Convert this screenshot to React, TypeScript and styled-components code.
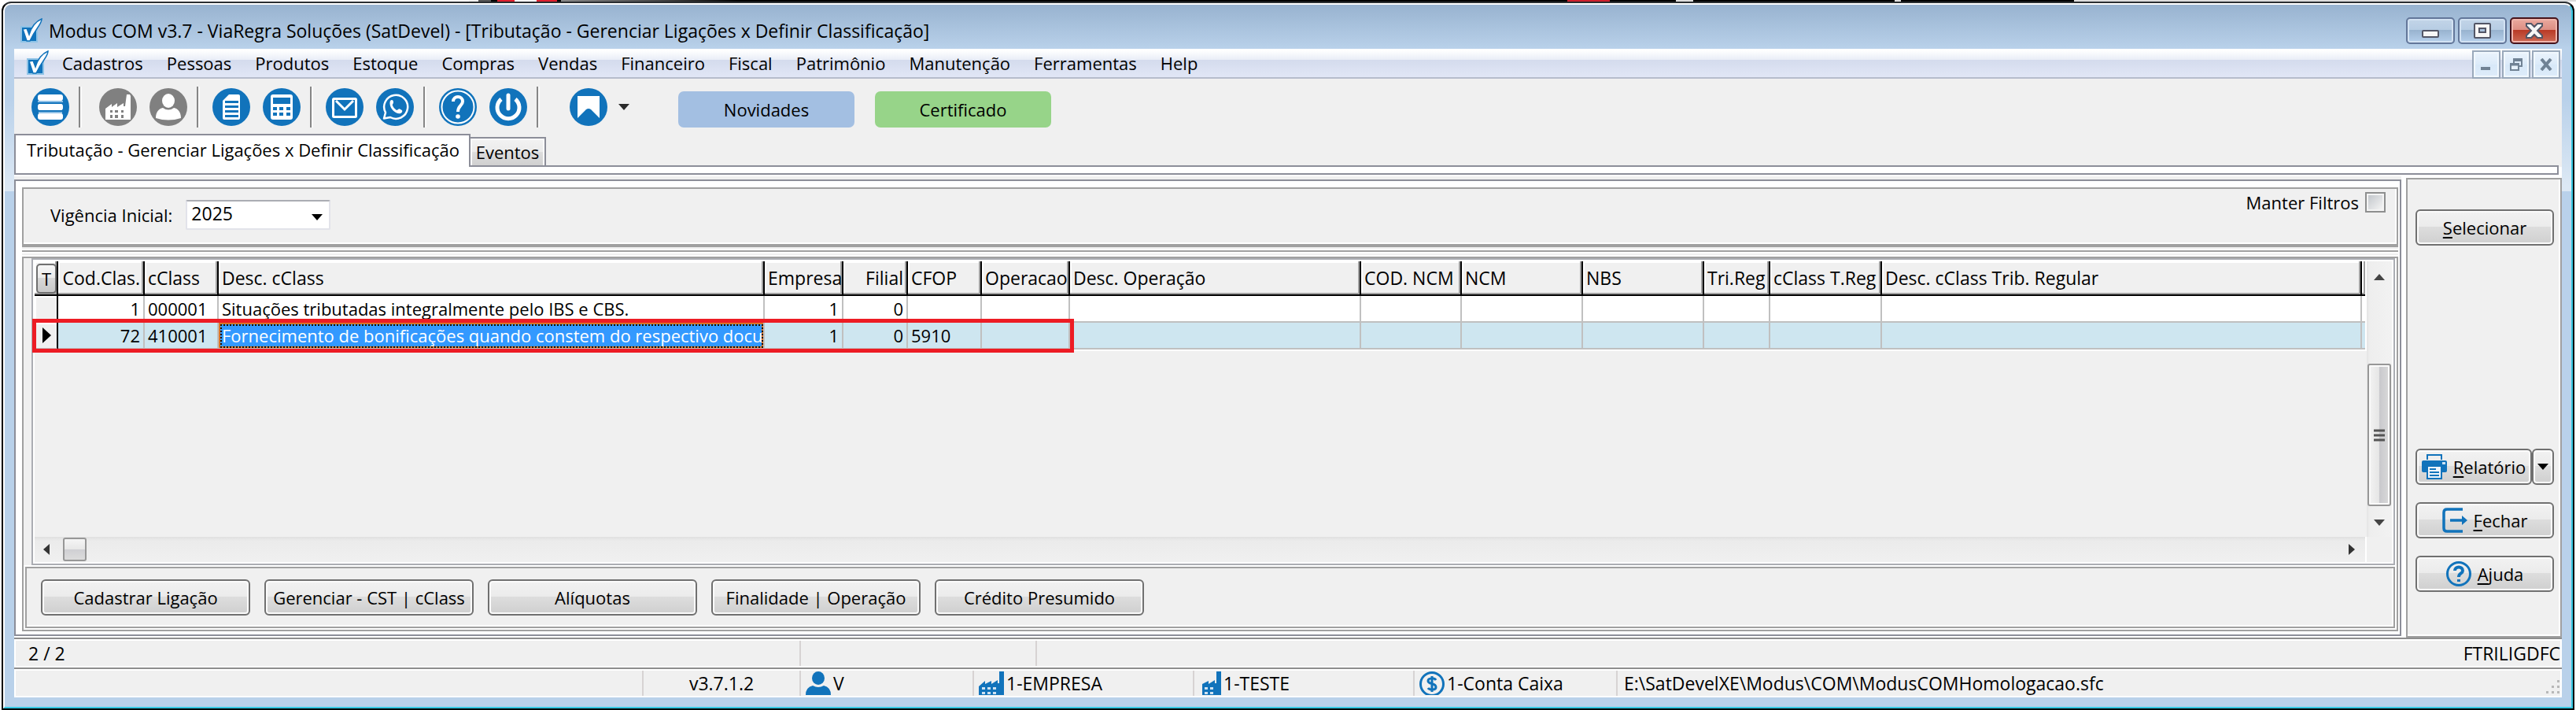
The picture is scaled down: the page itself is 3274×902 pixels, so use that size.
import React from "react";
import styled, { createGlobalStyle, css } from "styled-components";

const BLUE = "#1173bb";
const GRAY = "#808080";
const FACE = "#f0f0f0";
const EDGE = "#a0a0a0";
const PANEL_EDGE = "#8c8e99";

const GlobalStyle = createGlobalStyle`
  *, *::before, *::after { box-sizing: border-box; }
  body { margin: 0; background: #fff; }
  body, button, input, select, table {
    font-family: "Open Sans", "Noto Sans", sans-serif;
    font-size: 22px;
    line-height: 30px;
    color: #000;
  }
  button { margin: 0; padding: 0; cursor: default; white-space: nowrap; }
  svg { display: block; flex: none; }
  u { text-decoration-thickness: 2px; text-underline-offset: 3px; text-decoration-skip-ink: none; }
`;

/* ---------- window frame ---------- */

const Desktop = styled.div`
  min-height: 100vh;
  display: flex;
  padding: 2px 2px 0;
  background: linear-gradient(
      90deg,
      #fff 596px, #f0f0f0 596px 608px, #555 608px 624px, #000 624px 632px,
      #e01f2d 632px 654px, #fff 654px 682px, #e01f2d 682px 708px, #000 708px 713px,
      #888 713px, #444 840px, #000 940px 1992px, #d0202c 1992px 2046px, #000 2046px 2130px,
      #ddd 2130px 2152px, #000 2152px 2408px, #ddd 2408px 2416px, #000 2416px 2636px, #dcdcdc 2636px
    )
    top / 100% 2px no-repeat #fff;
`;

const Frame = styled.div`
  flex: 1;
  min-width: 0;
  display: flex;
  border: 2px solid #000;
  border-top-color: #2b2f33;
  border-radius: 12px 12px 0 0;
  background: #000;
`;

const Glass = styled.div`
  flex: 1;
  min-width: 0;
  display: flex;
  flex-direction: column;
  padding: 0 12px 12px;
  border: 2px solid #36c8e2;
  border-top-color: #fff;
  border-left-color: #fff;
  border-radius: 10px 10px 0 0;
  background: linear-gradient(
    #98b3d0, #b9d1ea 56px, #b9d1ea 120px, #dce8f4 230px, #dce8f4 237px, #b9d1ea 237px
  );
`;

const TitleBar = styled.header`
  height: 56px;
  display: flex;
  align-items: center;
  gap: 8px;
  padding: 14px 4px 4px 8px;
`;

const Title = styled.h1`
  flex: 1;
  margin: 0;
  font-size: 23px;
  font-weight: 400;
  white-space: nowrap;
`;

const CaptionButtons = styled.div`
  display: flex;
  gap: 4px;
`;

const CaptionButton = styled.button<{ $close?: boolean }>`
  width: 62px;
  height: 34px;
  display: grid;
  place-items: center;
  border: 2px solid ${(p) => (p.$close ? "#47141c" : "#63779a")};
  border-radius: 5px;
  box-shadow: inset 0 0 0 2px ${(p) => (p.$close ? "#f0b5ac" : "#d3e2f2")};
  background: ${(p) =>
    p.$close
      ? "linear-gradient(#eaa99f, #dc8d82 48%, #b93a26 48%, #cd6a55)"
      : "linear-gradient(#c3d5e8, #b6cce3 48%, #98b3cf 48%, #b6d0ec)"};
`;

const Client = styled.div`
  flex: 1;
  min-width: 0;
  display: flex;
  flex-direction: column;
  background: ${FACE};
`;

/* ---------- menu ---------- */

const MenuBar = styled.nav`
  height: 38px;
  display: flex;
  align-items: center;
  gap: 17px;
  padding: 0 2px 0 16px;
  border-bottom: 2px solid #b6bccc;
  background: linear-gradient(#fff 2px, #e9edf7 14px, #d4dbed 14px, #e1e6f6);
`;

const MenuItems = styled.ul`
  flex: 1;
  display: flex;
  gap: 30px;
  margin: 0;
  padding: 0;
  list-style: none;
`;

const MenuLink = styled.a`
  color: #000;
  text-decoration: none;
`;

const MdiButtons = styled.div`
  display: flex;
  align-self: flex-end;
  gap: 2px;
  margin-bottom: -2px;
`;

const MdiButton = styled.button`
  width: 36px;
  height: 36px;
  display: grid;
  place-items: center;
  border: 2px solid #9aa9bb;
  box-shadow: inset 0 0 0 2px #f1f8fe;
  background: linear-gradient(#eaf3fc, #dcebf9 50%, #d7e8f8 50%, #deecfa);
`;

/* ---------- toolbar ---------- */

const Toolbar = styled.div`
  height: 70px;
  display: flex;
  align-items: center;
  padding: 10px 22px 8px;
`;

const ToolGroup = styled.div`
  display: flex;
  gap: 16px;
`;

const ToolButton = styled.button`
  border: 0;
  border-radius: 50%;
  background: none;
`;

const Separator = styled.span<{ $after: number }>`
  width: 4px;
  height: 52px;
  margin: 0 ${(p) => p.$after}px 0 12px;
  border-left: 2px solid #868686;
  background: #fafafa;
`;

const DropButton = styled.button`
  margin-left: 14px;
  border: 0;
  background: none;
`;

const Pills = styled.div`
  display: flex;
  align-self: flex-end;
  gap: 26px;
  margin-left: 62px;
`;

const Pill = styled.button<{ $color: string }>`
  width: 224px;
  height: 46px;
  border: 0;
  border-radius: 7px;
  background: ${(p) => p.$color};
`;

/* ---------- tabs ---------- */

const Tabs = styled.div`
  height: 42px;
  display: flex;
  align-items: flex-start;
`;

const Tab = styled.button<{ $active?: boolean }>`
  border: 2px solid ${PANEL_EDGE};
  border-bottom: 0;
  ${(p) =>
    p.$active
      ? css`
          position: relative;
          height: 42px;
          padding: 0 14px 5px;
          width: 580px;
          background: #fff;
        `
      : css`
          height: 38px;
          width: 96px;
          margin-top: 4px;
          padding-bottom: 2px;
          border-left: 0;
          box-shadow: inset 2px 2px 0 #fbfbfb, inset -2px 0 0 #fbfbfb;
          background: linear-gradient(#f2f2f2, #ebebeb 48%, #dddddd 48%, #cfcfcf);
        `}
`;

const TabStrip = styled.div`
  height: 12px;
  margin-top: -2px;
  border: 2px solid ${PANEL_EDGE};
  background: #fff;
`;

const TabStripRow = styled.div`
  padding-right: 4px;
  background: linear-gradient(#fff, #fff) right / 4px 100% no-repeat;
`;

/* ---------- body ---------- */

const Body = styled.div`
  flex: 1;
  display: grid;
  grid-template-columns: minmax(0, 1fr) 198px;
  gap: 6px;
  padding-top: 2px;
  background: #fff;
`;

const Main = styled.main`
  display: flex;
  flex-direction: column;
  padding-bottom: 2px;
  border-top: 4px solid ${FACE};
`;

const MainPanel = styled.div`
  flex: 1;
  display: flex;
  flex-direction: column;
  padding: 8px 2px 4px 8px;
  border: 2px solid ${PANEL_EDGE};
`;

const FilterPanel = styled.form`
  height: 76px;
  display: flex;
  align-items: center;
  gap: 17px;
  padding: 0 14px 5px 34px;
  border: 2px solid ${EDGE};
  border-bottom-width: 4px;
  background: ${FACE};
  box-shadow: inset -2px -2px 0 #fff;
`;

const SelectBox = styled.div`
  position: relative;
  width: 184px;

  svg {
    position: absolute;
    right: 10px;
    top: 18px;
    pointer-events: none;
  }
`;

const Select = styled.select`
  appearance: none;
  display: block;
  width: 100%;
  height: 38px;
  padding: 0 5px 6px;
  border: 2px solid #e2e3ea;
  border-top-color: #abadb3;
  border-radius: 2px;
  background: #fff;
  font-size: 23px;
`;

const KeepFilters = styled.label`
  align-self: flex-start;
  display: flex;
  align-items: center;
  gap: 8px;
  margin: 2px 0 0 auto;
`;

const CheckBox = styled.input`
  appearance: none;
  width: 26px;
  height: 26px;
  margin: 0;
  border: 2px solid #8e8f8f;
  background: linear-gradient(135deg, #c3c7cc, #f4f4f4) content-box, #f4f4f4;
  padding: 2px;
`;

const Splitter = styled.div`
  height: 12px;
  background: linear-gradient(
    ${FACE} 2px, #fff 2px 4px, ${EDGE} 4px 6px, #fff 6px 8px, ${FACE} 8px 10px, #fff 10px
  );
`;

const GridPanel = styled.section`
  flex: 1;
  display: flex;
  flex-direction: column;
  border: 2px solid ${EDGE};
`;

const GridFrame = styled.div`
  flex: 1;
  display: flex;
  padding: 0 2px 0 10px;
  background: linear-gradient(90deg, ${FACE} 10px, #fff 10px);
`;

const Grid = styled.div`
  position: relative;
  flex: 1;
  min-width: 0;
  display: grid;
  grid-template-columns: minmax(0, 1fr) 32px;
  grid-template-rows: 1fr 32px;
  padding: 2px;
  border: 2px solid #abadb3;
  background: #fff;
`;

const GridView = styled.div`
  padding-right: 2px;
  background: linear-gradient(90deg, ${FACE}, ${FACE}) left 0 top 114px / 100% 100% no-repeat;
`;

const Table = styled.table`
  width: 100%;
  table-layout: fixed;
  border-collapse: separate;
  border-spacing: 0;
`;

const Col = styled.col<{ $w?: number }>`
  ${(p) => p.$w && `width: ${p.$w}px;`}
`;

const Th = styled.th<{ $right?: boolean; $corner?: boolean }>`
  height: 44px;
  padding: ${(p) => (p.$corner ? "2px 0 0 2px" : "0 4px")};
  overflow: hidden;
  font-size: 23px;
  font-weight: 400;
  text-align: ${(p) => (p.$right ? "right" : "left")};
  white-space: nowrap;
  border-right: 2px solid #000;
  border-bottom: 2px solid #000;
  background: ${FACE};
  box-shadow: inset -2px -2px 0 ${EDGE}, inset 2px 2px 0 #fff;

  &:last-child { border-right: 0; }
`;

const FilterToggle = styled.button`
  display: block;
  width: 26px;
  height: 38px;
  border: 2px solid #707070;
  border-radius: 5px;
  background: linear-gradient(#f6f6f6, #ebebeb 48%, #d8d8d8 48%, #c8c8c8);
  font-size: 22px;
`;

const Tr = styled.tr<{ $current?: boolean }>`
  background: ${(p) => (p.$current ? "#cee6f0" : "#fff")};
`;

const Td = styled.td<{ $right?: boolean; $selected?: boolean }>`
  height: 34px;
  padding: 0 4px;
  overflow: hidden;
  line-height: 32px;
  text-align: ${(p) => (p.$right ? "right" : "left")};
  white-space: nowrap;
  border-right: 2px solid #c0c0c0;
  border-bottom: 2px solid #c0c0c0;
  ${(p) =>
    p.$selected &&
    css`
      padding: 0 0 0 4px;
      color: #fff;
      background: #3399ff;
      outline: 2px dotted #1a0d00;
      outline-offset: -4px;
      box-shadow: inset 0 0 0 2px #d9762a;
    `}

  &:first-child {
    padding: 0 0 0 10px;
    border-right-color: #000;
    background: ${FACE};
    box-shadow: inset 2px 2px 0 #fff;
  }
  &:last-child { border-right: 0; }
`;

const RowMark = styled.div`
  position: absolute;
  top: 75px;
  left: -1px;
  width: 1324px;
  height: 43px;
  border: 5px solid #ed1c24;
  pointer-events: none;
`;

const VScroll = styled.div`
  display: flex;
  flex-direction: column;
  align-items: center;
  padding: 16px 0 14px;
  background: linear-gradient(90deg, #e4e4e4, #eeeeee 4px, #f2f2f2);
`;

const VThumb = styled.div`
  width: 30px;
  height: 181px;
  margin: auto 0 17px;
  display: grid;
  place-items: center;
  border: 2px solid #979797;
  border-radius: 3px;
  box-shadow: inset 0 0 0 2px #fafafa;
  background: linear-gradient(90deg, #f3f3f3, #e6e6e6 48%, #c8c8cc 50%, #dadada);
`;

const HScroll = styled.div`
  display: flex;
  align-items: center;
  margin-right: 2px;
  padding: 0 13px 0 11px;
  background: linear-gradient(#e0e0e0, #ebebeb 5px, #f0f0f0);
`;

const HThumb = styled.div`
  width: 30px;
  height: 30px;
  margin: 0 auto 0 17px;
  border: 2px solid #979797;
  border-radius: 3px;
  background: linear-gradient(#f5f5f5, #e8e8e8 48%, #cfcfd3 50%, #dcdcdc);
`;

const ScrollCorner = styled.div`
  background: ${FACE};
`;

const Actions = styled.div`
  height: 78px;
  display: flex;
  align-items: center;
  gap: 18px;
  margin: 2px;
  padding: 0 18px 0 18px;
  border: 2px solid ${EDGE};
  box-shadow: inset -2px -2px 0 #fff;
  background: ${FACE};
`;

const Button = styled.button<{ $width?: number }>`
  ${(p) => p.$width && `width: ${p.$width}px;`}
  height: 46px;
  display: flex;
  align-items: center;
  justify-content: center;
  gap: 8px;
  border: 2px solid #707070;
  border-radius: 6px;
  box-shadow: inset 0 0 0 2px #fbfbfb;
  background: linear-gradient(#f2f2f2, #ebebeb 48%, #dddddd 48%, #cfcfcf);
`;

const Side = styled.aside`
  display: flex;
  flex-direction: column;
  margin-top: 2px;
  padding: 38px 8px 56px 10px;
  border: 2px solid ${EDGE};
  box-shadow: inset -2px -2px 0 #fff;
  background: ${FACE};
`;

const SideActions = styled.div`
  display: flex;
  flex-direction: column;
  gap: 22px;
  margin-top: auto;
`;

const SplitButton = styled.div`
  display: grid;
  grid-template-columns: 1fr 28px;
`;

/* ---------- status ---------- */

const StatusBar = styled.div<{ $cols: string }>`
  height: 38px;
  display: grid;
  grid-template-columns: ${(p) => p.$cols};
  padding: 2px;
  border-top: 2px solid #8e8e8e;
  background: #fff;
`;

const StatusCell = styled.div<{ $align?: string; $pad?: number }>`
  display: flex;
  align-items: center;
  justify-content: ${(p) => p.$align ?? "flex-start"};
  gap: 3px;
  padding: 0 0 0 ${(p) => p.$pad ?? 6}px;
  font-size: 23px;
  white-space: nowrap;
  border-right: 2px solid #d7d3d3;
  background: ${FACE};

  &:last-child { border-right: 0; }
`;

const Grip = styled.svg`
  margin: auto 0 2px auto;
`;

/* ---------- drawings ---------- */

const Logo = () => (
  <svg width="28" height="32" viewBox="0 0 28 32" aria-hidden="true">
    <rect x="0" y="10" width="22" height="21" fill="#8fc3e6" />
    <rect x="2" y="12" width="18" height="17" fill={BLUE} />
    <path d="M3 14 L8 13 L11 21 C14 11 20 4 27 1 C27 8 20 12 12 29 L8 29 Z" fill="#fff" stroke={BLUE} strokeWidth="1.5" />
  </svg>
);

const Disc = ({ color = BLUE, children }: { color?: string; children: React.ReactNode }) => (
  <svg width="48" height="48" viewBox="0 0 48 48" aria-hidden="true">
    <circle cx="24" cy="24" r="24" fill={color} />
    {children}
  </svg>
);

const DatabaseIcon = () => (
  <Disc>
    <rect x="9" y="10" width="30" height="28" fill="#8fc0e6" />
    <rect x="8" y="8" width="32" height="8" rx="3" fill="#fff" />
    <rect x="8" y="16" width="32" height="4" fill="#8fc0e6" />
    <rect x="8" y="18" width="32" height="2" fill={BLUE} />
    <rect x="8" y="20" width="32" height="8" rx="3" fill="#fff" />
    <rect x="8" y="28" width="32" height="2" fill={BLUE} />
    <rect x="8" y="32" width="32" height="8" rx="3" fill="#fff" />
  </Disc>
);

const FactoryIcon = () => (
  <Disc color={GRAY}>
    <path d="M8 40 V26 L16 20 V24 L23 19 V24 L31 19 V23 H33 L35 8 H39 L40 10 V40 Z" fill="#fff" />
    <path d="M14 28h3v3h-3z M20 28h4v3h-4z M28 28h3v3h-3z M14 34h3v4h-3z M20 34h4v4h-4z M28 34h3v4h-3z" fill={GRAY} />
  </Disc>
);

const PersonIcon = () => (
  <Disc color={GRAY}>
    <ellipse cx="24" cy="16" rx="8" ry="9" fill="#fff" />
    <path d="M8 38 C8 30 12 26 17 25 Q24 30 31 25 C36 26 40 30 40 38 Q24 43 8 38 Z" fill="#fff" />
  </Disc>
);

const DocumentIcon = () => (
  <Disc>
    <path d="M21 8 H33 Q35 8 35 10 V38 Q35 40 33 40 H15 Q13 40 13 38 V16 Z" fill="#fff" />
    <path d="M16 17.5h17 M16 23.5h17 M16 29.5h17 M16 35.5h17" stroke={BLUE} strokeWidth="3" />
  </Disc>
);

const CalculatorIcon = () => (
  <Disc>
    <rect x="10" y="8" width="28" height="32" rx="3" fill="#fff" />
    <rect x="13" y="12" width="22" height="8" fill={BLUE} />
    <path d="M13 24h5v4h-5z M21 24h5v4h-5z M30 24h5v4h-5z M13 31h5v4h-5z M21 31h5v4h-5z M30 31h5v4h-5z" fill={BLUE} />
  </Disc>
);

const MailIcon = () => (
  <Disc>
    <rect x="9.5" y="13.5" width="29" height="23" rx="1" fill="none" stroke="#fff" strokeWidth="3" />
    <path d="M13 16 L24 27 L35 16" fill="none" stroke="#fff" strokeWidth="3" />
  </Disc>
);

const WhatsAppIcon = () => (
  <Disc>
    <path
      d="M12 31 A15 15 0 1 1 18 37 L10 38.500 Z"
      fill="none"
      stroke="#fff"
      strokeWidth="2.500"
      strokeLinejoin="round"
    />
    <path
      d="M18 16 C20 14 22 15 22 18 C22 20 20 21 21 22 C22 25 24 26 26 28 C28 28 29 25 31 27 C34 28 34 30 31 32 C26 34 15 25 18 16 Z"
      fill="#fff"
    />
  </Disc>
);

const HelpDiscIcon = () => (
  <Disc>
    <circle cx="24" cy="24" r="20.500" fill="none" stroke="#fff" strokeWidth="2" />
    <path d="M18 17 C18 9 30 9 30 17 C30 22 24 22 24 30" fill="none" stroke="#fff" strokeWidth="4" />
    <circle cx="24" cy="36" r="2.800" fill="#fff" />
  </Disc>
);

const PowerIcon = () => (
  <Disc>
    <path d="M15 14 A14 14 0 1 0 33 14" fill="none" stroke="#fff" strokeWidth="5" />
    <path d="M24 9 V26" stroke="#fff" strokeWidth="5" strokeLinecap="round" />
  </Disc>
);

const BookmarkIcon = () => (
  <Disc>
    <path d="M10 10 H38 V38 L27 27 Q24 25 21 27 L10 38 Z" fill="#fff" />
  </Disc>
);

const Triangle = ({ dir, size = 14, color = "#111" }: { dir: "up" | "down" | "left" | "right"; size?: number; color?: string }) => {
  const h = Math.round(size * 0.57);
  const flat = dir === "up" || dir === "down";
  const w = flat ? size : h;
  const t = flat ? h : size;
  const points = {
    up: `0,${t} ${w},${t} ${w / 2},0`,
    down: `0,0 ${w},0 ${w / 2},${t}`,
    left: `${w},0 ${w},${t} 0,${t / 2}`,
    right: `0,0 0,${t} ${w},${t / 2}`,
  }[dir];
  return (
    <svg width={w} height={t} viewBox={`0 0 ${w} ${t}`} aria-hidden="true">
      <polygon points={points} fill={color} />
    </svg>
  );
};

const GlyphMinimize = () => (
  <svg width="22" height="20" viewBox="0 0 22 20" aria-hidden="true">
    <rect x="1" y="10" width="20" height="8" rx="1" fill="#f6f6f6" stroke="#535666" strokeWidth="2" />
  </svg>
);

const GlyphMaximize = () => (
  <svg width="22" height="20" viewBox="0 0 22 20" aria-hidden="true">
    <rect x="1" y="1" width="20" height="18" rx="1" fill="#f6f6f6" stroke="#535666" strokeWidth="2" />
    <rect x="7" y="7" width="8" height="5" fill="#a9c1dc" stroke="#535666" strokeWidth="2" />
  </svg>
);

const GlyphClose = () => (
  <svg width="24" height="20" viewBox="0 0 24 20" aria-hidden="true">
    <path
      d="M2 1 H8 L12 5 L16 1 H22 V4 L16 10 L22 16 V19 H16 L12 15 L8 19 H2 V16 L8 10 L2 4 Z"
      fill="#f6f6f6"
      stroke="#535666"
      strokeWidth="2"
    />
  </svg>
);

const MdiMinimize = () => (
  <svg width="16" height="16" viewBox="0 0 16 16" aria-hidden="true">
    <rect x="1" y="11" width="12" height="4" fill="#708294" />
  </svg>
);

const MdiRestore = () => (
  <svg width="16" height="16" viewBox="0 0 16 16" aria-hidden="true">
    <path d="M5 6 V1 H15 V10 H12" fill="none" stroke="#708294" strokeWidth="2" />
    <path d="M4 2 H16" stroke="#708294" strokeWidth="4" />
    <rect x="1" y="7" width="10" height="8" fill="#e6f1fb" stroke="#708294" strokeWidth="2" />
    <path d="M0 8 H12" stroke="#708294" strokeWidth="3" />
  </svg>
);

const MdiClose = () => (
  <svg width="16" height="16" viewBox="0 0 16 16" aria-hidden="true">
    <path d="M2 1 L14 15 M14 1 L2 15" stroke="#708294" strokeWidth="4" />
  </svg>
);

const PrinterIcon = () => (
  <svg width="32" height="32" viewBox="0 0 32 32" aria-hidden="true">
    <path d="M7 7 V1 H25 V7" fill="none" stroke={BLUE} strokeWidth="2" />
    <rect x="0" y="8" width="32" height="15" rx="2" fill={BLUE} />
    <rect x="26" y="10" width="4" height="3" fill="#cde3f4" />
    <rect x="7" y="15" width="18" height="16" fill="#eef4fa" stroke={BLUE} strokeWidth="2" />
    <path d="M10 19 H18 M10 23 H22 M10 27 H22" stroke={BLUE} strokeWidth="2" />
  </svg>
);

const ExitIcon = () => (
  <svg width="32" height="32" viewBox="0 0 32 32" aria-hidden="true">
    <path d="M26 2 H6 Q2 2 2 6 V26 Q2 30 6 30 H26" fill="none" stroke={BLUE} strokeWidth="3.500" />
    <path d="M10 16 H27" stroke={BLUE} strokeWidth="3.500" />
    <path d="M25 10 L32 16 L25 22 Z" fill={BLUE} />
  </svg>
);

const HelpIcon = () => (
  <svg width="32" height="32" viewBox="0 0 32 32" aria-hidden="true">
    <circle cx="16" cy="16" r="14.500" fill="none" stroke={BLUE} strokeWidth="3" />
    <path d="M11 12 C11 6 21 6 21 12 C21 16 16 15 16 20" fill="none" stroke={BLUE} strokeWidth="4" />
    <rect x="14" y="23" width="4" height="3" fill={BLUE} />
  </svg>
);

const UserSmall = () => (
  <svg width="32" height="30" viewBox="0 0 32 30" aria-hidden="true">
    <ellipse cx="16" cy="8.500" rx="8" ry="8.500" fill={BLUE} />
    <path d="M0 30 Q0 20 9 18 Q16 22 23 18 Q32 20 32 30 Z" fill={BLUE} />
  </svg>
);

const FactorySmall = ({ narrow }: { narrow?: boolean }) => (
  <svg width={narrow ? 24 : 32} height="30" viewBox={narrow ? "8 0 24 30" : "0 0 32 30"} aria-hidden="true">
    <path d="M0 30 V19 L8 12 V16 L16 12 V16 L24 11 V15 H26 V0 H32 V30 Z" fill={BLUE} />
    <path d="M4 20h4v3h-4z M11 20h4v3h-4z M18 20h4v3h-4z M4 26h4v3h-4z M11 26h4v3h-4z M18 26h4v3h-4z" fill="#cfe2f1" />
  </svg>
);

const MoneyIcon = () => (
  <svg width="32" height="30" viewBox="0 0 32 30" aria-hidden="true">
    <circle cx="16" cy="16" r="14.500" fill="none" stroke={BLUE} strokeWidth="3" />
    <path d="M21 11 C19 8 11 8 11 12 C11 17 21 14 21 20 C21 24 13 24 11 21 M16 6 V26" fill="none" stroke={BLUE} strokeWidth="3" />
  </svg>
);

/* ---------- data ---------- */

const MENU = [
  "Cadastros", "Pessoas", "Produtos", "Estoque", "Compras", "Vendas",
  "Financeiro", "Fiscal", "Patrimônio", "Manutenção", "Ferramentas", "Help",
];

const TOOL_GROUPS = [
  { after: 22, items: [["Banco de dados", DatabaseIcon]] },
  { after: 16, items: [["Empresa", FactoryIcon], ["Usuário", PersonIcon]] },
  { after: 16, items: [["Documento", DocumentIcon], ["Calculadora", CalculatorIcon]] },
  { after: 16, items: [["E-mail", MailIcon], ["WhatsApp", WhatsAppIcon]] },
  { after: 38, items: [["Ajuda", HelpDiscIcon], ["Sair", PowerIcon]] },
] as { after: number; items: [string, React.FC][] }[];

type Column = { label: string; width?: number; right?: boolean };

const COLUMNS: Column[] = [
  { label: "Cod.Clas.", width: 110, right: true },
  { label: "cClass", width: 94 },
  { label: "Desc. cClass", width: 694 },
  { label: "Empresa", width: 100, right: true },
  { label: "Filial", width: 82, right: true },
  { label: "CFOP", width: 94 },
  { label: "Operacao", width: 112 },
  { label: "Desc. Operação", width: 370 },
  { label: "COD. NCM", width: 128 },
  { label: "NCM", width: 154 },
  { label: "NBS", width: 154 },
  { label: "Tri.Reg", width: 84 },
  { label: "cClass T.Reg", width: 142 },
  { label: "Desc. cClass Trib. Regular" },
];

const ROWS = [
  ["1", "000001", "Situações tributadas integralmente pelo IBS e CBS.", "1", "0", ""],
  ["72", "410001", "Fornecimento de bonificações quando constem do respectivo docu", "1", "0", "5910"],
];

const CURRENT_ROW = 1;
const SELECTED_COLUMN = 2;

const ACTIONS = [
  "Cadastrar Ligação", "Gerenciar - CST | cClass", "Alíquotas", "Finalidade | Operação", "Crédito Presumido",
];

/* ---------- page ---------- */

export default function App() {
  return (
    <>
      <GlobalStyle />
      <Desktop>
        <Frame>
          <Glass>
            <TitleBar>
              <Logo />
              <Title>
                Modus COM v3.7 - ViaRegra Soluções (SatDevel) - [Tributação - Gerenciar Ligações x Definir Classificação]
              </Title>
              <CaptionButtons>
                <CaptionButton aria-label="Minimizar"><GlyphMinimize /></CaptionButton>
                <CaptionButton aria-label="Maximizar"><GlyphMaximize /></CaptionButton>
                <CaptionButton $close aria-label="Fechar janela"><GlyphClose /></CaptionButton>
              </CaptionButtons>
            </TitleBar>

            <Client>
              <MenuBar>
                <Logo />
                <MenuItems>
                  {MENU.map((item) => (
                    <li key={item}><MenuLink href="#">{item}</MenuLink></li>
                  ))}
                </MenuItems>
                <MdiButtons>
                  <MdiButton aria-label="Minimizar documento"><MdiMinimize /></MdiButton>
                  <MdiButton aria-label="Restaurar documento"><MdiRestore /></MdiButton>
                  <MdiButton aria-label="Fechar documento"><MdiClose /></MdiButton>
                </MdiButtons>
              </MenuBar>

              <Toolbar>
                {TOOL_GROUPS.map(({ after, items }) => (
                  <React.Fragment key={items[0][0]}>
                    <ToolGroup>
                      {items.map(([label, Icon]) => (
                        <ToolButton key={label} aria-label={label}><Icon /></ToolButton>
                      ))}
                    </ToolGroup>
                    <Separator $after={after} />
                  </React.Fragment>
                ))}
                <ToolButton aria-label="Favoritos"><BookmarkIcon /></ToolButton>
                <DropButton aria-label="Mais favoritos"><Triangle dir="down" color="#2b2b2b" /></DropButton>
                <Pills>
                  <Pill $color="#a3bfe2">Novidades</Pill>
                  <Pill $color="#97d489">Certificado</Pill>
                </Pills>
              </Toolbar>

              <Tabs role="tablist">
                <Tab $active role="tab" aria-selected="true">
                  Tributação - Gerenciar Ligações x Definir Classificação
                </Tab>
                <Tab role="tab" aria-selected="false">Eventos</Tab>
              </Tabs>
              <TabStripRow><TabStrip /></TabStripRow>

              <Body>
                <Main>
                  <MainPanel>
                    <FilterPanel>
                      <label htmlFor="vigencia">Vigência Inicial:</label>
                      <SelectBox>
                        <Select id="vigencia" defaultValue="2025">
                          <option>2025</option>
                        </Select>
                        <Triangle dir="down" color="#000" />
                      </SelectBox>
                      <KeepFilters>
                        Manter Filtros
                        <CheckBox type="checkbox" />
                      </KeepFilters>
                    </FilterPanel>
                    <Splitter />
                    <GridPanel>
                      <GridFrame>
                        <Grid>
                          <GridView>
                            <Table>
                              <colgroup>
                                <Col $w={30} />
                                {COLUMNS.map((c) => <Col key={c.label} $w={c.width} />)}
                                <Col $w={4} />
                              </colgroup>
                              <thead>
                                <tr>
                                  <Th $corner><FilterToggle>T</FilterToggle></Th>
                                  {COLUMNS.map((c) => <Th key={c.label} $right={c.right}>{c.label}</Th>)}
                                  <Th $corner />
                                </tr>
                              </thead>
                              <tbody>
                                {ROWS.map((row, r) => (
                                  <Tr key={row[1]} $current={r === CURRENT_ROW}>
                                    <Td>{r === CURRENT_ROW && <Triangle dir="right" size={20} color="#000" />}</Td>
                                    {COLUMNS.map((c, i) => (
                                      <Td
                                        key={c.label}
                                        $right={c.right}
                                        $selected={r === CURRENT_ROW && i === SELECTED_COLUMN}
                                      >
                                        {row[i]}
                                      </Td>
                                    ))}
                                    <Td />
                                  </Tr>
                                ))}
                              </tbody>
                            </Table>
                          </GridView>
                          <VScroll>
                            <Triangle dir="up" color="#444" />
                            <VThumb>
                              <svg width="14" height="16" viewBox="0 0 14 16" aria-hidden="true">
                                <path d="M0 2 H14 M0 8 H14 M0 14 H14" stroke="#555" strokeWidth="3" />
                              </svg>
                            </VThumb>
                            <Triangle dir="down" color="#444" />
                          </VScroll>
                          <HScroll>
                            <Triangle dir="left" color="#333" />
                            <HThumb />
                            <Triangle dir="right" color="#333" />
                          </HScroll>
                          <ScrollCorner />
                          <RowMark />
                        </Grid>
                      </GridFrame>
                      <Actions>
                        {ACTIONS.map((a) => <Button key={a} $width={266}>{a}</Button>)}
                      </Actions>
                    </GridPanel>
                  </MainPanel>
                </Main>

                <Side>
                  <Button><span><u>S</u>elecionar</span></Button>
                  <SideActions>
                    <SplitButton>
                      <Button><PrinterIcon /><span><u>R</u>elatório</span></Button>
                      <Button aria-label="Opções do relatório"><Triangle dir="down" color="#000" /></Button>
                    </SplitButton>
                    <Button><ExitIcon /><span><u>F</u>echar</span></Button>
                    <Button><HelpIcon /><span><u>A</u>juda</span></Button>
                  </SideActions>
                </Side>
              </Body>

              <StatusBar $cols="998px 300px 1fr">
                <StatusCell $pad={16}>2 / 2</StatusCell>
                <StatusCell />
                <StatusCell $align="flex-end">FTRILIGDFC</StatusCell>
              </StatusBar>
              <StatusBar $cols="798px 200px 220px 280px 280px 258px 1fr">
                <StatusCell />
                <StatusCell $align="center" $pad={0}>v3.7.1.2</StatusCell>
                <StatusCell><UserSmall />V</StatusCell>
                <StatusCell><FactorySmall />1-EMPRESA</StatusCell>
                <StatusCell $pad={10}><FactorySmall narrow />1-TESTE</StatusCell>
                <StatusCell><MoneyIcon />1-Conta Caixa</StatusCell>
                <StatusCell $pad={8}>
                  E:\SatDevelXE\Modus\COM\ModusCOMHomologacao.sfc
                  <Grip width="18" height="18" viewBox="0 0 18 18" aria-hidden="true">
                    <path d="M14 0h3v3h-3z M7 7h3v3h-3z M14 7h3v3h-3z M0 14h3v3h-3z M7 14h3v3h-3z M14 14h3v3h-3z" fill="#b8b8b8" />
                  </Grip>
                </StatusCell>
              </StatusBar>
            </Client>
          </Glass>
        </Frame>
      </Desktop>
    </>
  );
}
